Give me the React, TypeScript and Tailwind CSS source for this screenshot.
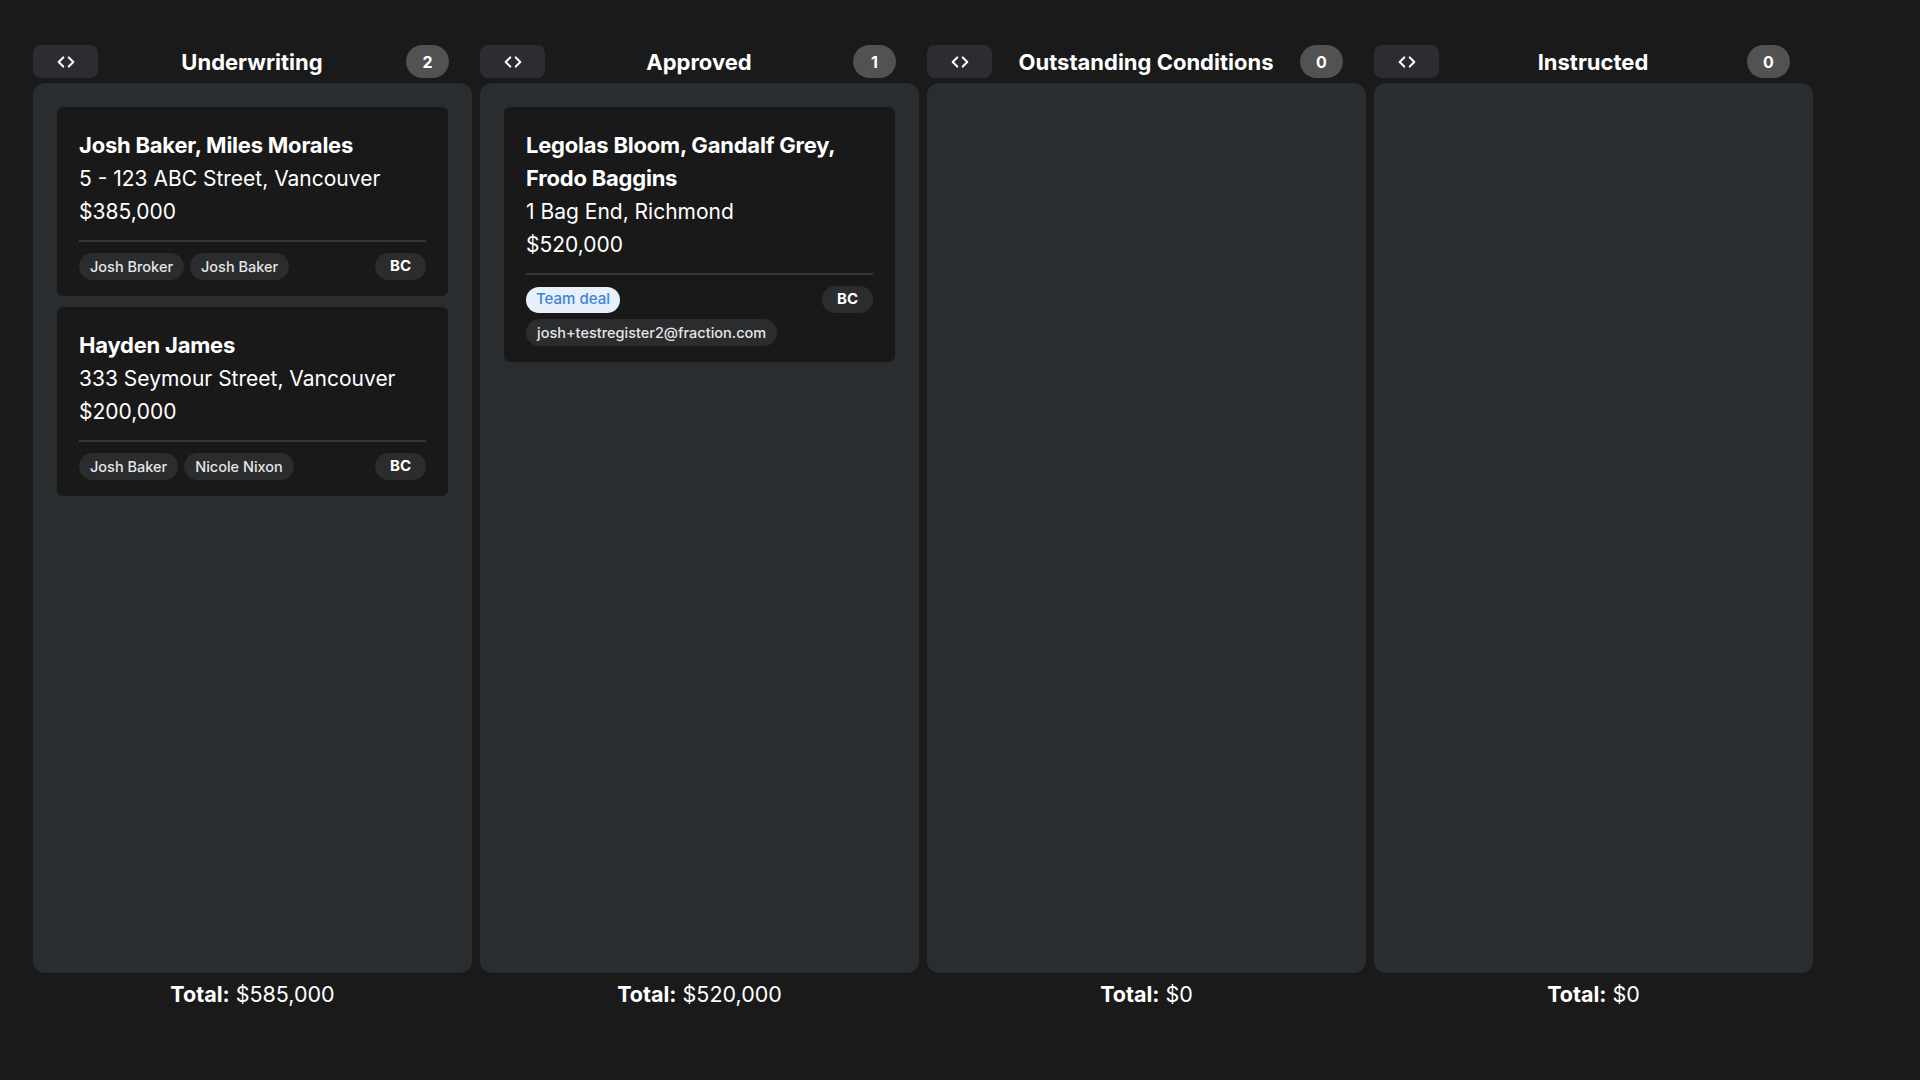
const COLUMNS = [
  {
    title: 'Underwriting',
    count: 2,
    total: '$585,000',
    deals: [
      {
        names: 'Josh Baker, Miles Morales',
        address: '5 - 123 ABC Street, Vancouver',
        amount: '$385,000',
        people: ['Josh Broker', 'Josh Baker'],
      },
      {
        names: 'Hayden James',
        address: '333 Seymour Street, Vancouver',
        amount: '$200,000',
        people: ['Josh Baker', 'Nicole Nixon'],
      },
    ],
  },
  {
    title: 'Approved',
    count: 1,
    total: '$520,000',
    deals: [
      {
        names: 'Legolas Bloom, Gandalf Grey, Frodo Baggins',
        address: '1 Bag End, Richmond',
        amount: '$520,000',
        team: true,
        email: 'josh+testregister2@fraction.com',
        people: [] as string[],
      },
    ],
  },
  { title: 'Outstanding Conditions', count: 0, total: '$0', deals: [] },
  { title: 'Instructed', count: 0, total: '$0', deals: [] },
]

type Deal = {
  names: string
  address: string
  amount: string
  people: string[]
  team?: boolean
  email?: string
}

function CodeIcon() {
  return (
    <svg width="22" height="22" viewBox="0 0 24 24" fill="none" stroke="currentColor" strokeWidth="2.2" strokeLinecap="round" strokeLinejoin="round">
      <path d="m9 7-5 5 5 5" />
      <path d="m15 7 5 5-5 5" />
    </svg>
  )
}

function Chip({ children }: { children: React.ReactNode }) {
  return (
    <span className="h-[27px] px-[11px] rounded-full bg-[#2a2c2e] text-[14.5px] font-medium text-[#e6e6e6] flex items-center">
      {children}
    </span>
  )
}

function DealCard({ deal }: { deal: Deal }) {
  return (
    <div className="rounded-md bg-[#19191a] px-[22px] pt-[22px] pb-[16px]">
      <p className="text-[22px] leading-[33px] font-bold tracking-[-0.01em] text-white">{deal.names}</p>
      <p className="text-[21px] leading-[33px] text-white">{deal.address}</p>
      <p className="text-[21px] leading-[33px] text-white">{deal.amount}</p>
      <div className="mt-3 h-[2px] bg-[#35373a]" />
      <div className="mt-[11px] flex items-center justify-between">
        <div className="flex gap-[6px]">
          {deal.team && (
            <span className="h-[26px] px-[10px] rounded-full bg-[#e8f0fc] text-[15px] font-medium text-[#3f82d8] flex items-center">
              Team deal
            </span>
          )}
          {deal.people.map((p) => (
            <Chip key={p}>{p}</Chip>
          ))}
        </div>
        <span className="h-[27px] px-[15px] rounded-full bg-[#2a2c2e] text-[15px] font-bold text-white flex items-center">
          BC
        </span>
      </div>
      {deal.email && (
        <div className="mt-[6px] flex">
          <Chip>{deal.email}</Chip>
        </div>
      )}
    </div>
  )
}

export default function App() {
  return (
    <div className="min-h-screen bg-[#1a1a1a] text-white font-['Inter','Liberation_Sans',sans-serif]">
      <div className="flex gap-2 pl-[33px] pt-[45px]">
        {COLUMNS.map((col) => (
          <div key={col.title} className="w-[439px] flex flex-col">
            <div className="flex items-center h-[33px] pr-[23px]">
              <button className="w-[65px] h-[33px] rounded-lg bg-[#2b2d30] flex items-center justify-center text-white">
                <CodeIcon />
              </button>
              <h2 className="flex-1 text-center text-[22px] font-bold pt-[2px]">{col.title}</h2>
              <span className="w-[43px] h-[33px] rounded-full bg-[#515253] flex items-center justify-center text-[16px] font-bold">
                {col.count}
              </span>
            </div>
            <div className="mt-[5px] h-[890px] rounded-xl bg-[#2a2d2f] p-6 flex flex-col gap-[11px]">
              {col.deals.map((d) => (
                <DealCard key={d.names} deal={d as Deal} />
              ))}
            </div>
            <p className="mt-[6px] text-center text-[21.5px] leading-[30px]">
              <span className="font-bold">Total:</span> {col.total}
            </p>
          </div>
        ))}
      </div>
    </div>
  )
}
